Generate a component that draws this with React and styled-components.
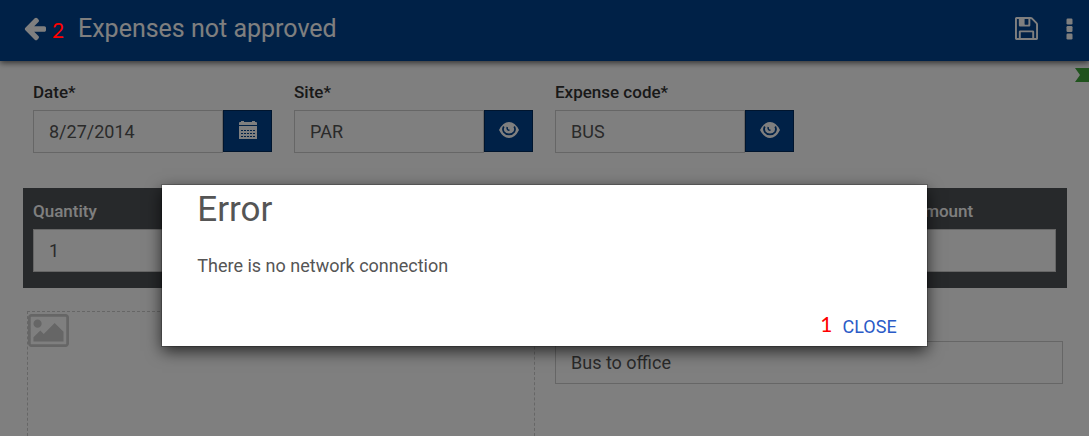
import React from "react";
import styled, { createGlobalStyle } from "styled-components";

const GlobalStyle = createGlobalStyle`
  * { box-sizing: border-box; }
  body { margin: 0; background: #fff; }
  body, button, input { font-family: Roboto, "Liberation Sans", sans-serif; font-size: 18px; font-weight: 400; }
`;

const Page = styled.div`
  position: relative;
  min-height: 100vh;
  display: flex;
  flex-direction: column;
  overflow: hidden;
  color: #555;
`;

const Header = styled.header`
  display: flex;
  align-items: center;
  height: 61px;
  padding: 0 16px 4px 23px;
  background: #00428e;
  color: #fff;
  box-shadow: 0 2px 6px rgba(0, 0, 0, 0.6);
`;

const Title = styled.h1`
  flex: 1;
  margin: 0 0 0 32px;
  font-size: 25px;
  line-height: 32px;
  font-weight: 400;
`;

const IconButton = styled.button`
  display: flex;
  padding: 0;
  border: 0;
  background: none;
  color: inherit;
  margin-left: ${(p) => p.$gap || 0}px;
`;

const FieldRow = styled.div`
  display: grid;
  grid-template-columns: repeat(4, 1fr);
  gap: 22px;
  padding: 19px 34px 0 33px;
`;

const Field = styled.div`
  width: ${(p) => p.$width || "auto"};
`;

const Label = styled.label`
  display: block;
  margin-bottom: 6px;
  font-size: 17px;
  line-height: 24px;
  font-weight: 500;
  color: ${(p) => (p.$light ? "#fff" : "#333")};
`;

const InputGroup = styled.div`
  display: flex;
  align-items: flex-start;
`;

const TextInput = styled.input`
  flex: 1;
  width: 100%;
  min-width: 0;
  height: 43px;
  padding: 0 15px;
  border: 1px solid #ccc;
  border-radius: 0;
  background: #fff;
  color: #555;
  outline: 0;
`;

const AddonButton = styled.button`
  display: flex;
  align-items: center;
  justify-content: center;
  width: 49px;
  height: 42px;
  padding: 0 0 2px;
  border: 1px solid #002a5c;
  background: #00428e;
  color: #fff;
`;

const AmountPanel = styled.section`
  display: flex;
  justify-content: space-between;
  margin: 35px 22px 0 23px;
  padding: 11px 11px 16px 10px;
  background: #4e5256;
`;

const Details = styled.div`
  flex: 1;
  display: grid;
  grid-template-columns: 1fr 1fr;
  gap: 20px;
  padding: 23px 26px 0 27px;
`;

const PhotoBox = styled.div`
  min-height: 125px;
  padding: 2px 0;
  border: 1px dashed #ccc;
  border-bottom: 0;
  color: #ccc;
`;

const Ribbon = styled.svg`
  position: absolute;
  top: 68px;
  right: 0;
`;

const Overlay = styled.div`
  position: absolute;
  inset: 0;
  padding-top: 185px;
  background: rgba(0, 0, 0, 0.5);
`;

const Dialog = styled.div`
  width: calc(70% + 2px);
  margin: 0 auto;
  padding: 0 30px 7px 35px;
  background: #fff;
  box-shadow: 0 0 0 1px rgba(0, 0, 0, 0.2), 0 5px 15px rgba(0, 0, 0, 0.7);
`;

const DialogTitle = styled.h2`
  margin: 0;
  font-size: 35px;
  line-height: 49px;
  font-weight: 400;
`;

const DialogText = styled.p`
  margin: 20px 0 36px;
  line-height: 24px;
`;

const DialogFooter = styled.div`
  display: flex;
  justify-content: flex-end;
  align-items: flex-start;
  gap: 10px;
`;

const CloseButton = styled.button`
  padding: 0;
  border: 0;
  background: none;
  line-height: 25px;
  color: #2a5bc7;
`;

const StepNumber = styled.span`
  font-family: Lato, sans-serif;
  font-size: 21px;
  line-height: 20px;
  color: #f00;
`;

const HeaderStep = styled(StepNumber)`
  position: absolute;
  top: 20px;
  left: 52px;
`;

const ArrowIcon = () => (
  <svg width="23" height="24" viewBox="64 192 1600 1664" fill="currentColor">
    <path d="M1664 960v128q0 53-32.500 90.500t-84.500 37.500h-704l293 294q38 36 38 90t-38 90l-75 76q-37 37-90 37-52 0-91-37l-651-652q-37-37-37-90 0-52 37-91l651-650q38-38 91-38 52 0 90 38l75 74q38 38 38 91t-38 91l-293 293h704q52 0 84.500 37.500t32.500 90.500z" />
  </svg>
);

const SaveIcon = () => (
  <svg width="23" height="23" viewBox="128 128 1536 1536" fill="currentColor">
    <path d="M512 1536h768v-384h-768v384zm896 0h128v-896q0-14-10-38.500t-20-34.500l-281-281q-10-10-34-20t-39-10v416q0 40-28 68t-68 28h-576q-40 0-68-28t-28-68v-416h-128v1280h128v-416q0-40 28-68t68-28h832q40 0 68 28t28 68v416zm-384-928v-320q0-13-9.500-22.500t-22.500-9.500h-192q-13 0-22.500 9.500t-9.500 22.500v320q0 13 9.500 22.500t22.500 9.500h192q13 0 22.500-9.500t9.500-22.500zm640 32v928q0 40-28 68t-68 28h-1344q-40 0-68-28t-28-68v-1344q0-40 28-68t68-28h928q40 0 88 20t76 48l280 280q28 28 48 76t20 88z" />
  </svg>
);

const MoreIcon = () => (
  <svg width="7" height="22" viewBox="0 0 7 22" fill="currentColor">
    <rect x="0.500" y="0.500" width="6" height="6" rx="1.200" />
    <rect x="0.500" y="8" width="6" height="6" rx="1.200" />
    <rect x="0.500" y="15.500" width="6" height="6" rx="1.200" />
  </svg>
);

const CalendarIcon = () => (
  <svg width="18" height="18" viewBox="0 0 18 18" fill="currentColor">
    <path d="M0 4V2Q0 1 1 1H2V0H5V1H13V0H16V1H17Q18 1 18 2V4Z" />
    <path
      fillRule="evenodd"
      d="M0 5H18V18H0ZM2 9v1h2v-1zm3 0v1h2v-1zm3 0v1h2v-1zm3 0v1h2v-1zm3 0v1h2v-1zM2 12v1h2v-1zm3 0v1h2v-1zm3 0v1h2v-1zm3 0v1h2v-1zm3 0v1h2v-1zM2 15v1h2v-1zm3 0v1h2v-1zm3 0v1h2v-1zm3 0v1h2v-1zm3 0v1h2v-1z"
    />
  </svg>
);

const EyeIcon = () => (
  <svg width="20" height="16" viewBox="0 0 20 16" fill="none">
    <path fill="currentColor" d="M0 8Q4 0 10 0T20 8Q16 16 10 16T0 8Z" />
    <path stroke="#00428e" strokeWidth="1.700" d="M4.800 4.500C2.500 8.500 5.500 12.300 10 12.300S17.500 8.500 15.200 4.500" />
    <path stroke="#00428e" strokeWidth="1.500" d="M8.200 5Q7.600 8 10.500 8.300" />
  </svg>
);

const PictureIcon = () => (
  <svg width="41" height="33" viewBox="-64 128 1920 1536" fill="currentColor">
    <path d="M576 576q0 80-56 136t-136 56-136-56-56-136 56-136 136-56 136 56 56 136zm1024 384v448h-1408v-192l320-320 160 160 512-512zm96-704h-1600q-13 0-22.500 9.500t-9.500 22.500v1216q0 13 9.500 22.500t22.500 9.500h1600q13 0 22.500-9.500t9.500-22.500v-1216q0-13-9.500-22.500t-22.500-9.500zm160 32v1216q0 66-47 113t-113 47h-1600q-66 0-113-47t-47-113v-1216q0-66 47-113t113-47h1600q66 0 113 47t47 113z" />
  </svg>
);

function LookupField({ id, label, value, action, icon }) {
  return (
    <Field>
      <Label htmlFor={id}>{label}</Label>
      <InputGroup>
        <TextInput id={id} defaultValue={value} />
        <AddonButton type="button" aria-label={action}>{icon}</AddonButton>
      </InputGroup>
    </Field>
  );
}

export default function App() {
  return (
    <Page>
      <GlobalStyle />
      <Header>
        <IconButton type="button" aria-label="Back"><ArrowIcon /></IconButton>
        <Title>Expenses not approved</Title>
        <IconButton type="button" aria-label="Save"><SaveIcon /></IconButton>
        <IconButton type="button" aria-label="More" $gap={28}><MoreIcon /></IconButton>
      </Header>
      <Ribbon width="14" height="14" viewBox="0 0 14 14">
        <path d="M0 0H14V14H0L5 7Z" fill="#3fa63a" />
      </Ribbon>
      <FieldRow>
        <LookupField id="date" label="Date*" value="8/27/2014" action="Pick date" icon={<CalendarIcon />} />
        <LookupField id="site" label="Site*" value="PAR" action="Find site" icon={<EyeIcon />} />
        <LookupField id="code" label="Expense code*" value="BUS" action="Find code" icon={<EyeIcon />} />
      </FieldRow>
      <AmountPanel>
        <Field $width="241px">
          <Label htmlFor="quantity" $light>Quantity</Label>
          <TextInput id="quantity" defaultValue="1" />
        </Field>
        <Field $width="143px">
          <Label htmlFor="amount" $light>Amount</Label>
          <TextInput id="amount" />
        </Field>
      </AmountPanel>
      <Details>
        <PhotoBox><PictureIcon /></PhotoBox>
        <Field>
          <Label as="div">&nbsp;</Label>
          <TextInput aria-label="Description" defaultValue="Bus to office" />
        </Field>
      </Details>
      <Overlay>
        <Dialog role="dialog" aria-labelledby="dialog-title">
          <DialogTitle id="dialog-title">Error</DialogTitle>
          <DialogText>There is no network connection</DialogText>
          <DialogFooter>
            <StepNumber>1</StepNumber>
            <CloseButton type="button">CLOSE</CloseButton>
          </DialogFooter>
        </Dialog>
        <HeaderStep>2</HeaderStep>
      </Overlay>
    </Page>
  );
}
